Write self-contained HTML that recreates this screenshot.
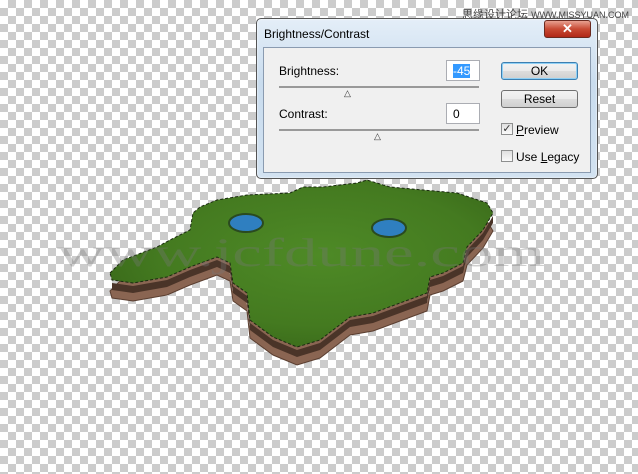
<!DOCTYPE html>
<html><head><meta charset="utf-8"><style>
*{margin:0;padding:0;box-sizing:border-box}
body{width:638px;height:474px;overflow:hidden;position:relative;font-family:"Liberation Sans",sans-serif;
background-color:#fff;background-image:linear-gradient(45deg,#ccc 25%,transparent 25%,transparent 75%,#ccc 75%),linear-gradient(45deg,#ccc 25%,transparent 25%,transparent 75%,#ccc 75%);background-size:16px 16px;background-position:0 0,8px 8px}
.abs{position:absolute}
.dlg{left:256px;top:18px;width:342px;height:161px;border:1px solid #555;border-radius:5px;background:linear-gradient(180deg,#e4eef8,#c9dcee 40%,#d2e2f1);box-shadow:0 0 2px #fff inset}
.client{left:6px;top:28px;width:328px;height:126px;background:#f0f0f0;border:1px solid #8a9bb0}
.t{font-size:12px;color:#000}
.inp{background:#fff;border:1px solid #abadb3;width:34px;height:21px;font-size:12px;padding:3px 0 0 6px}
.btn{width:77px;height:18px;border:1px solid #707070;border-radius:3px;background:linear-gradient(#f2f2f2,#ebebeb 50%,#dddddd 51%,#cfcfcf);font-size:12px;text-align:center;line-height:16px}
.line{height:2px;background:#999;width:200px}
.cb{width:12px;height:12px;border:1px solid #8e8f8f;background:linear-gradient(#e0e0e0,#fafafa)}
</style></head><body>
<svg class="abs" style="left:0;top:0" width="638" height="474">
<defs>
<radialGradient id="g" cx="0.55" cy="0.45" r="0.6"><stop offset="0" stop-color="#4e8a26"/><stop offset="0.7" stop-color="#447a20"/><stop offset="1" stop-color="#3a6a1a"/></radialGradient>
</defs>
<path transform="translate(0,18)" fill="#8a6552" stroke="#5a3e30" d="M110,273 L123,260 157,247 170,240 190,230 193,213 200,207 217,200 247,195 290,193 303,187 323,187 357,183 367,180 390,187 423,190 457,193 487,203 493,213 483,230 467,247 463,263 443,273 430,277 427,293 400,303 373,313 350,317 337,327 320,340 297,347 273,337 250,320 247,293 233,283 230,263 217,257 190,267 167,277 133,283 112,280Z"/>
<path transform="translate(0,8)" fill="none" stroke="#fff" stroke-width="1" stroke-dasharray="4 3" d="M112,280 L133,283 167,277 190,267 217,257 230,263 233,283 247,293 250,320 273,337 297,347 320,340 337,327 350,317 373,313 400,303 427,293 430,277 443,273 463,263 467,247 483,230 493,213"/>
<path transform="translate(0,3)" fill="#4a3428" d="M112,280 L133,283 167,277 190,267 217,257 230,263 233,283 247,293 250,320 273,337 297,347 320,340 337,327 350,317 373,313 400,303 427,293 430,277 443,273 463,263 467,247 483,230 493,213 L493,220 483,237 467,254 463,270 443,280 430,284 427,300 400,310 373,320 350,324 337,334 320,347 297,354 273,344 250,327 247,300 233,290 230,270 217,264 190,274 167,284 133,290 112,287Z"/>
<path fill="url(#g)" stroke="#1a2a10" stroke-width="1" stroke-dasharray="3 2" d="M110,273 L123,260 157,247 170,240 190,230 193,213 200,207 217,200 247,195 290,193 303,187 323,187 357,183 367,180 390,187 423,190 457,193 487,203 493,213 483,230 467,247 463,263 443,273 430,277 427,293 400,303 373,313 350,317 337,327 320,340 297,347 273,337 250,320 247,293 233,283 230,263 217,257 190,267 167,277 133,283 112,280Z"/>
<ellipse cx="246" cy="223" rx="17" ry="9" fill="#2f7fc0" stroke="#2a4a20" stroke-width="2"/>
<ellipse cx="389" cy="228" rx="17" ry="9" fill="#2f7fc0" stroke="#2a4a20" stroke-width="2"/>
<text x="57" y="266" font-family="Liberation Serif,serif" font-size="40" fill="#777" opacity="0.35" textLength="488" lengthAdjust="spacingAndGlyphs">www.jcfdune.com</text>
<text x="462" y="18" font-family="Liberation Sans,Noto Sans CJK SC,sans-serif" font-size="11" fill="#444">思缘设计论坛 <tspan font-size="9">WWW.MISSYUAN.COM</tspan></text>
</svg>
<div class="abs dlg">
<div class="abs t" style="left:7px;top:8px">Brightness/Contrast</div>
<div class="abs" style="left:287px;top:1px;width:47px;height:18px;border:1px solid #6b2a20;border-radius:3px;background:linear-gradient(#e8a090,#c84a34 50%,#b02818);color:#fff;font-weight:bold;font-size:13px;text-align:center;line-height:16px">✕</div>
<div class="abs client">
<div class="abs t" style="left:15px;top:16px">Brightness:</div>
<div class="abs inp" style="left:182px;top:12px"><span style="background:#3399ff;color:#fff">-45</span></div>
<div class="abs line" style="left:15px;top:38px"></div>
<div class="abs" style="left:80px;top:40px;color:#333;font-size:9px">△</div>
<div class="abs t" style="left:15px;top:59px">Contrast:</div>
<div class="abs inp" style="left:182px;top:55px">0</div>
<div class="abs line" style="left:15px;top:81px"></div>
<div class="abs" style="left:110px;top:83px;color:#333;font-size:9px">△</div>
<div class="abs btn" style="left:237px;top:14px;border-color:#3c7fb1;box-shadow:0 0 0 1px #8fd0f5 inset">OK</div>
<div class="abs btn" style="left:237px;top:42px">Reset</div>
<div class="abs cb" style="left:237px;top:75px;font-size:11px;line-height:10px;color:#333;text-align:center">✓</div>
<div class="abs t" style="left:252px;top:75px"><u>P</u>review</div>
<div class="abs cb" style="left:237px;top:102px"></div>
<div class="abs t" style="left:252px;top:102px">Use <u>L</u>egacy</div>
</div>
</div>
</body></html>
